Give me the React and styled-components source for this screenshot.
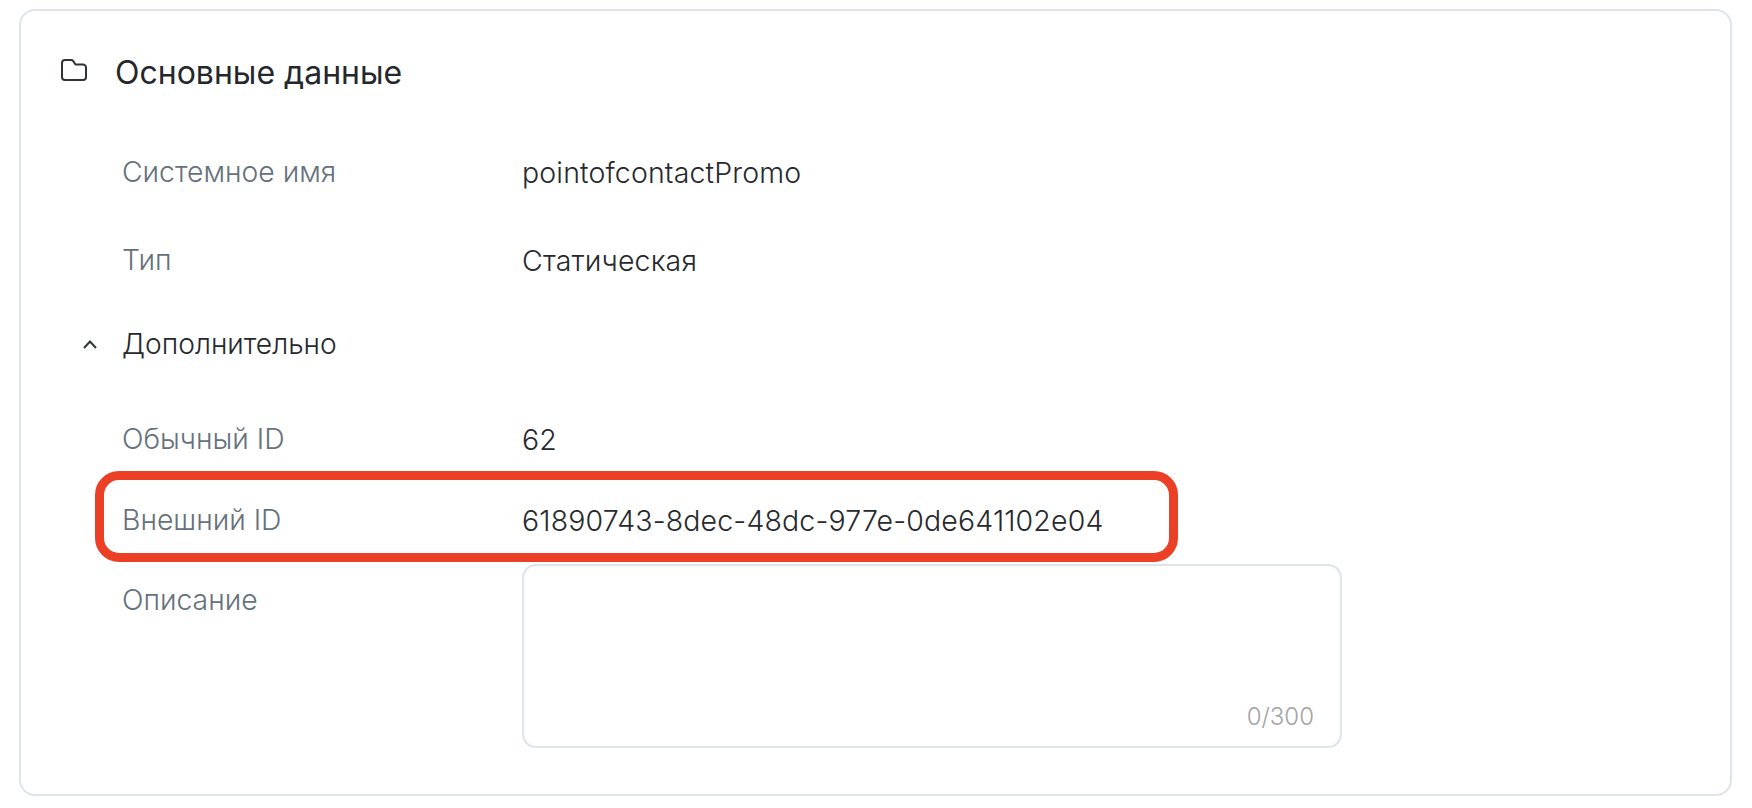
import { createGlobalStyle, styled } from "styled-components";

const GlobalStyle = createGlobalStyle`
  html, body {
    margin: 0;
    background: #ffffff;
    font-family: Inter, "Noto Sans", sans-serif;
  }
`;

const FolderIcon = () => (
  <svg width="26" height="22" viewBox="0 0 26 22" fill="none">
    <path
      d="M1 4a3 3 0 0 1 3-3h6.200c.8 0 1.400.3 1.900.9L14.500 5.500H22a3 3 0 0 1 3 3V18a3 3 0 0 1-3 3H4a3 3 0 0 1-3-3V4z"
      stroke="#2f3338"
      strokeWidth="2"
      strokeLinejoin="round"
    />
  </svg>
);

const ChevronUp = () => (
  <svg width="16" height="11" viewBox="0 0 16 11" fill="none">
    <path d="M2 9l6-6.500L14 9" stroke="#2f3338" strokeWidth="2" />
  </svg>
);

const App = () => {
  return (
    <>
      <GlobalStyle />
      <Page>
        <Card>
          <Header>
            <FolderSlot>
              <FolderIcon />
            </FolderSlot>
            <Title>Основные данные</Title>
          </Header>

          <Row $top={52}>
            <Label>Системное имя</Label>
            <Value>pointofcontactPromo</Value>
          </Row>
          <Row $top={40}>
            <Label>Тип</Label>
            <Value>Статическая</Value>
          </Row>
          <Toggle>
            <ChevronSlot>
              <ChevronUp />
            </ChevronSlot>
            <ToggleText>Дополнительно</ToggleText>
          </Toggle>
          <Row $top={47}>
            <Label>Обычный ID</Label>
            <Value>62</Value>
          </Row>
          <Row $top={33}>
            <Highlight />
            <Label>Внешний ID</Label>
            <Value>61890743-8dec-48dc-977e-0de641102e04</Value>
          </Row>
          <DescriptionRow>
            <DescriptionLabel>Описание</DescriptionLabel>
            <TextBox>
              <Counter>0/300</Counter>
            </TextBox>
          </DescriptionRow>
        </Card>
      </Page>
    </>
  );
};

const Page = styled.div`
  padding: 9px 20px 12px 19px;
`;

const Card = styled.section`
  box-sizing: border-box;
  height: 787px;
  padding: 0 0 0 38px;
  border: 2px solid #dde4ea;
  border-radius: 16px;
`;

const Header = styled.header`
  display: flex;
  align-items: center;
  gap: 28px;
  height: 48px;
  margin-top: 37px;
`;

const FolderSlot = styled.span`
  display: flex;
  margin: 0 0 4px 2px;
`;

const Title = styled.h2`
  margin: 0;
  font-size: 32px;
  font-weight: 400;
  color: #24272b;
`;

const Row = styled.div`
  position: relative;
  display: grid;
  grid-template-columns: 400px 1fr;
  align-items: center;
  height: 48px;
  margin-top: ${(p) => p.$top}px;
  padding-left: 63px;
`;

const Label = styled.span`
  font-size: 28.3px;
  font-weight: 300;
  color: #65717b;
`;

const Value = styled.span`
  font-size: 28.5px;
  font-weight: 300;
  letter-spacing: 0.15px;
  color: #26292d;
`;

const Toggle = styled.div`
  display: flex;
  align-items: center;
  height: 48px;
  margin-top: 36px;
  padding-left: 23px;
`;

const ChevronSlot = styled.span`
  display: flex;
  width: 40px;
`;

const ToggleText = styled.span`
  font-size: 28.2px;
  font-weight: 300;
  color: #26292d;
`;

const Highlight = styled.div`
  position: absolute;
  left: 36px;
  top: -25px;
  width: 1083px;
  height: 91px;
  box-sizing: border-box;
  border: 9px solid #ec4026;
  border-radius: 24px;
  pointer-events: none;
`;

const DescriptionRow = styled.div`
  display: grid;
  grid-template-columns: 400px 820px;
  align-items: start;
  margin-top: 20px;
  padding-left: 63px;
`;

const DescriptionLabel = styled(Label)`
  margin-top: 19px;
`;

const TextBox = styled.div`
  box-sizing: border-box;
  height: 184px;
  display: flex;
  align-items: flex-end;
  justify-content: flex-end;
  padding: 0 26px 15px 0;
  border: 2px solid #dde4ea;
  border-radius: 14px;
`;

const Counter = styled.span`
  font-size: 24px;
  font-weight: 300;
  color: #a3a3a3;
`;

export default App;
